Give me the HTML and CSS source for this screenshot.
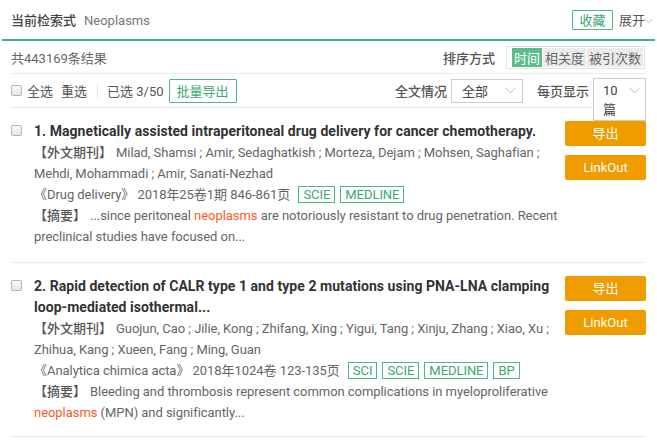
FILE: index.html
```html
<!DOCTYPE html>
<html lang="zh-CN">
<head>
<meta charset="utf-8">
<link rel="stylesheet" href="styles.css">
</head>
<body>
<div class="page">
  <div class="topbar">
    <div class="query"><span class="query-label">当前检索式</span><span class="query-text">Neoplasms</span></div>
    <div class="top-actions">
      <span class="btn-outline small">收藏</span>
      <span class="expand">展开<svg class="chev" width="9" height="6" viewBox="0 0 9 6"><path d="M0.5 0.8 L4.5 4.8 L8.5 0.8" fill="none" stroke="#bbb" stroke-width="1"/></svg></span>
    </div>
  </div>

  <div class="summary">
    <span class="count">共443169条结果</span>
    <div class="sort">
      <span class="sort-label">排序方式</span>
      <div class="sort-group">
        <span class="sort-btn active">时间</span>
        <span class="sort-btn">相关度</span>
        <span class="sort-btn">被引次数</span>
      </div>
    </div>
  </div>

  <div class="toolbar">
    <div class="tb-left">
      <span class="cbox"></span>
      <span class="tb-link first-link">全选</span>
      <span class="tb-link">重选</span>
      <span class="vsep"></span>
      <span class="tb-text">已选 3/50</span>
      <span class="btn-outline batch">批量导出</span>
    </div>
    <div class="tb-right">
      <span class="tb-label">全文情况</span>
      <span class="select wide">全部<svg class="chev" width="11" height="7" viewBox="0 0 11 7"><path d="M0.5 0.8 L5.5 5.8 L10.5 0.8" fill="none" stroke="#bbb" stroke-width="1"/></svg></span>
      <span class="tb-label">每页显示</span>
      <span class="select-wrap"><span class="select narrow"><span class="sel-val">10<svg class="chev" width="11" height="7" viewBox="0 0 11 7"><path d="M0.5 0.8 L5.5 5.8 L10.5 0.8" fill="none" stroke="#bbb" stroke-width="1"/></svg></span><span class="sel-unit">篇</span></span></span>
    </div>
  </div>

  <div class="item first">
    <span class="cbox item-cb"></span>
    <div class="item-body">
      <div class="title">1. Magnetically assisted intraperitoneal drug delivery for cancer chemotherapy.</div>
      <div class="line"><b class="tag-label">【外文期刊】</b>Milad, Shamsi ; Amir, Sedaghatkish ; Morteza, Dejam ; Mohsen, Saghafian ; Mehdi, Mohammadi ; Amir, Sanati-Nezhad</div>
      <div class="line">《Drug delivery》 2018年25卷1期 846-861页 <span class="badge">SCIE</span><span class="badge">MEDLINE</span></div>
      <div class="line"><b class="tag-label">【摘要】</b>...since peritoneal <span class="hl">neoplasms</span> are notoriously resistant to drug penetration. Recent preclinical studies have focused on...</div>
    </div>
    <div class="item-actions">
      <span class="btn-orange">导出</span>
      <span class="btn-orange">LinkOut</span>
    </div>
  </div>

  <div class="item">
    <span class="cbox item-cb"></span>
    <div class="item-body">
      <div class="title">2. Rapid detection of CALR type 1 and type 2 mutations using PNA-LNA clamping loop-mediated isothermal...</div>
      <div class="line"><b class="tag-label">【外文期刊】</b>Guojun, Cao ; Jilie, Kong ; Zhifang, Xing ; Yigui, Tang ; Xinju, Zhang ; Xiao, Xu ; Zhihua, Kang ; Xueen, Fang ; Ming, Guan</div>
      <div class="line">《Analytica chimica acta》 2018年1024卷 123-135页 <span class="badge">SCI</span><span class="badge">SCIE</span><span class="badge">MEDLINE</span><span class="badge">BP</span></div>
      <div class="line"><b class="tag-label">【摘要】</b>Bleeding and thrombosis represent common complications in myeloproliferative <span class="hl">neoplasms</span> (MPN) and significantly...</div>
    </div>
    <div class="item-actions">
      <span class="btn-orange">导出</span>
      <span class="btn-orange">LinkOut</span>
    </div>
  </div>
</div>
</body>
</html>
```

FILE: styles.css
```css
* { box-sizing: border-box; }
html, body { margin: 0; padding: 0; background: #fff; }
body {
  font-family: Roboto, "Noto Sans CJK SC", sans-serif;
  font-size: 13px;
  color: #666;
}
.page { width: 657px; }

.topbar {
  margin: 0 2px;
  height: 41px;
  padding: 0 2px 0 9px;
  border-bottom: 2px solid #3db37b;
  display: flex;
  align-items: center;
  justify-content: space-between;
}
.query-label { color: #444; font-weight: 500; margin-right: 8px; }
.query-text { color: #777; }
.top-actions { display: flex; align-items: center; }
.btn-outline {
  border: 1px solid #4cb885;
  color: #3aa870;
  border-radius: 1px;
  display: inline-flex;
  align-items: center;
  justify-content: center;
}
.btn-outline.small { width: 41px; height: 20px; font-size: 13px; margin-right: 6px; }
.expand { color: #555; display: inline-flex; align-items: center; }
.expand .chev { margin-top: 3px; margin-left: -1px; }

.summary {
  margin: 0 12px 0 11px;
  height: 33px;
  border-bottom: 1px solid #ececec;
  display: flex;
  align-items: center;
  justify-content: space-between;
}
.count { color: #666; }
.sort { display: flex; align-items: center; }
.sort-label { color: #555; font-weight: 500; margin-right: 11px; }
.sort-group {
  display: flex;
  gap: 1px;
  border: 1px solid #e2e2e2;
  padding: 1px 1px 1px 5px;
  height: 23px;
}
.sort-btn {
  background: #ebebeb;
  color: #666;
  padding: 0 2px;
  display: flex;
  align-items: center;
  height: 19px;
}
.sort-btn.active { background: #5bbd8c; color: #fff; }

.toolbar {
  margin: 0 12px 0 11px;
  height: 34px;
  border-bottom: 1px solid #ececec;
  display: flex;
  align-items: center;
  justify-content: space-between;
}
.tb-left, .tb-right { display: flex; align-items: center; }
.cbox {
  width: 11px;
  height: 11px;
  border: 1px solid #b5b5b5;
  border-radius: 2px;
  background: linear-gradient(#fafafa, #e6e6e6);
  display: inline-block;
  flex: none;
}
.tb-link { color: #555; margin-left: 8px; }
.tb-link.first-link { margin-left: 5px; }
.vsep { width: 1px; height: 14px; background: #e4e4e4; margin: 0 9px 0 10px; }
.tb-text { color: #555; }
.btn-outline.batch { width: 68px; height: 24px; margin-left: 5px; }
.tb-label { color: #555; font-weight: 500; margin-right: 2px; }
.select {
  border: 1px solid #ccc;
  color: #444;
  background: #fff;
  display: flex;
  align-items: center;
  justify-content: space-between;
}
.select.wide { width: 72px; height: 24px; padding: 0 6px 0 10px; margin-right: 14px; margin-left: 2px; }
.select-wrap { position: relative; width: 52px; height: 24px; margin-left: 2px; }
.select.narrow {
  position: absolute;
  left: 0; top: -1px;
  width: 53px;
  height: 43px;
  flex-direction: column;
  align-items: stretch;
  justify-content: flex-start;
  padding: 2px 5px 0 9px;
  z-index: 2;
}
.sel-val { display: flex; justify-content: space-between; align-items: center; height: 19px; }
.sel-unit { line-height: 20px; }

.item {
  margin: 0 11px 0 11px;
  padding: 13px 0 13px;
  border-bottom: 1px solid #ececec;
  display: flex;
  align-items: flex-start;
  line-height: 21px;
}
.item.first { padding-bottom: 15px; }
.item-cb { margin-top: 4px; }
.item-body { width: 529px; margin-left: 12px; }
.title { color: #333; font-weight: bold; font-size: 14px; letter-spacing: 0.05px; }
.line { color: #666; letter-spacing: -0.05px; }
.tag-label { color: #555; font-weight: 500; margin-right: 4px; letter-spacing: 0; }
.hl { color: #ff5a1f; }
.badge {
  display: inline-block;
  border: 1px solid #4cb885;
  color: #3aa870;
  line-height: 15px;
  padding: 0 4px;
  margin-left: 5px;
}
.item-actions {
  margin-left: auto;
  display: flex;
  flex-direction: column;
  gap: 9px;
}
.btn-orange {
  width: 81px;
  height: 25px;
  background: #ef9c00;
  color: #fff;
  border-radius: 2px;
  display: flex;
  align-items: center;
  justify-content: center;
  font-size: 13px;
}
```
